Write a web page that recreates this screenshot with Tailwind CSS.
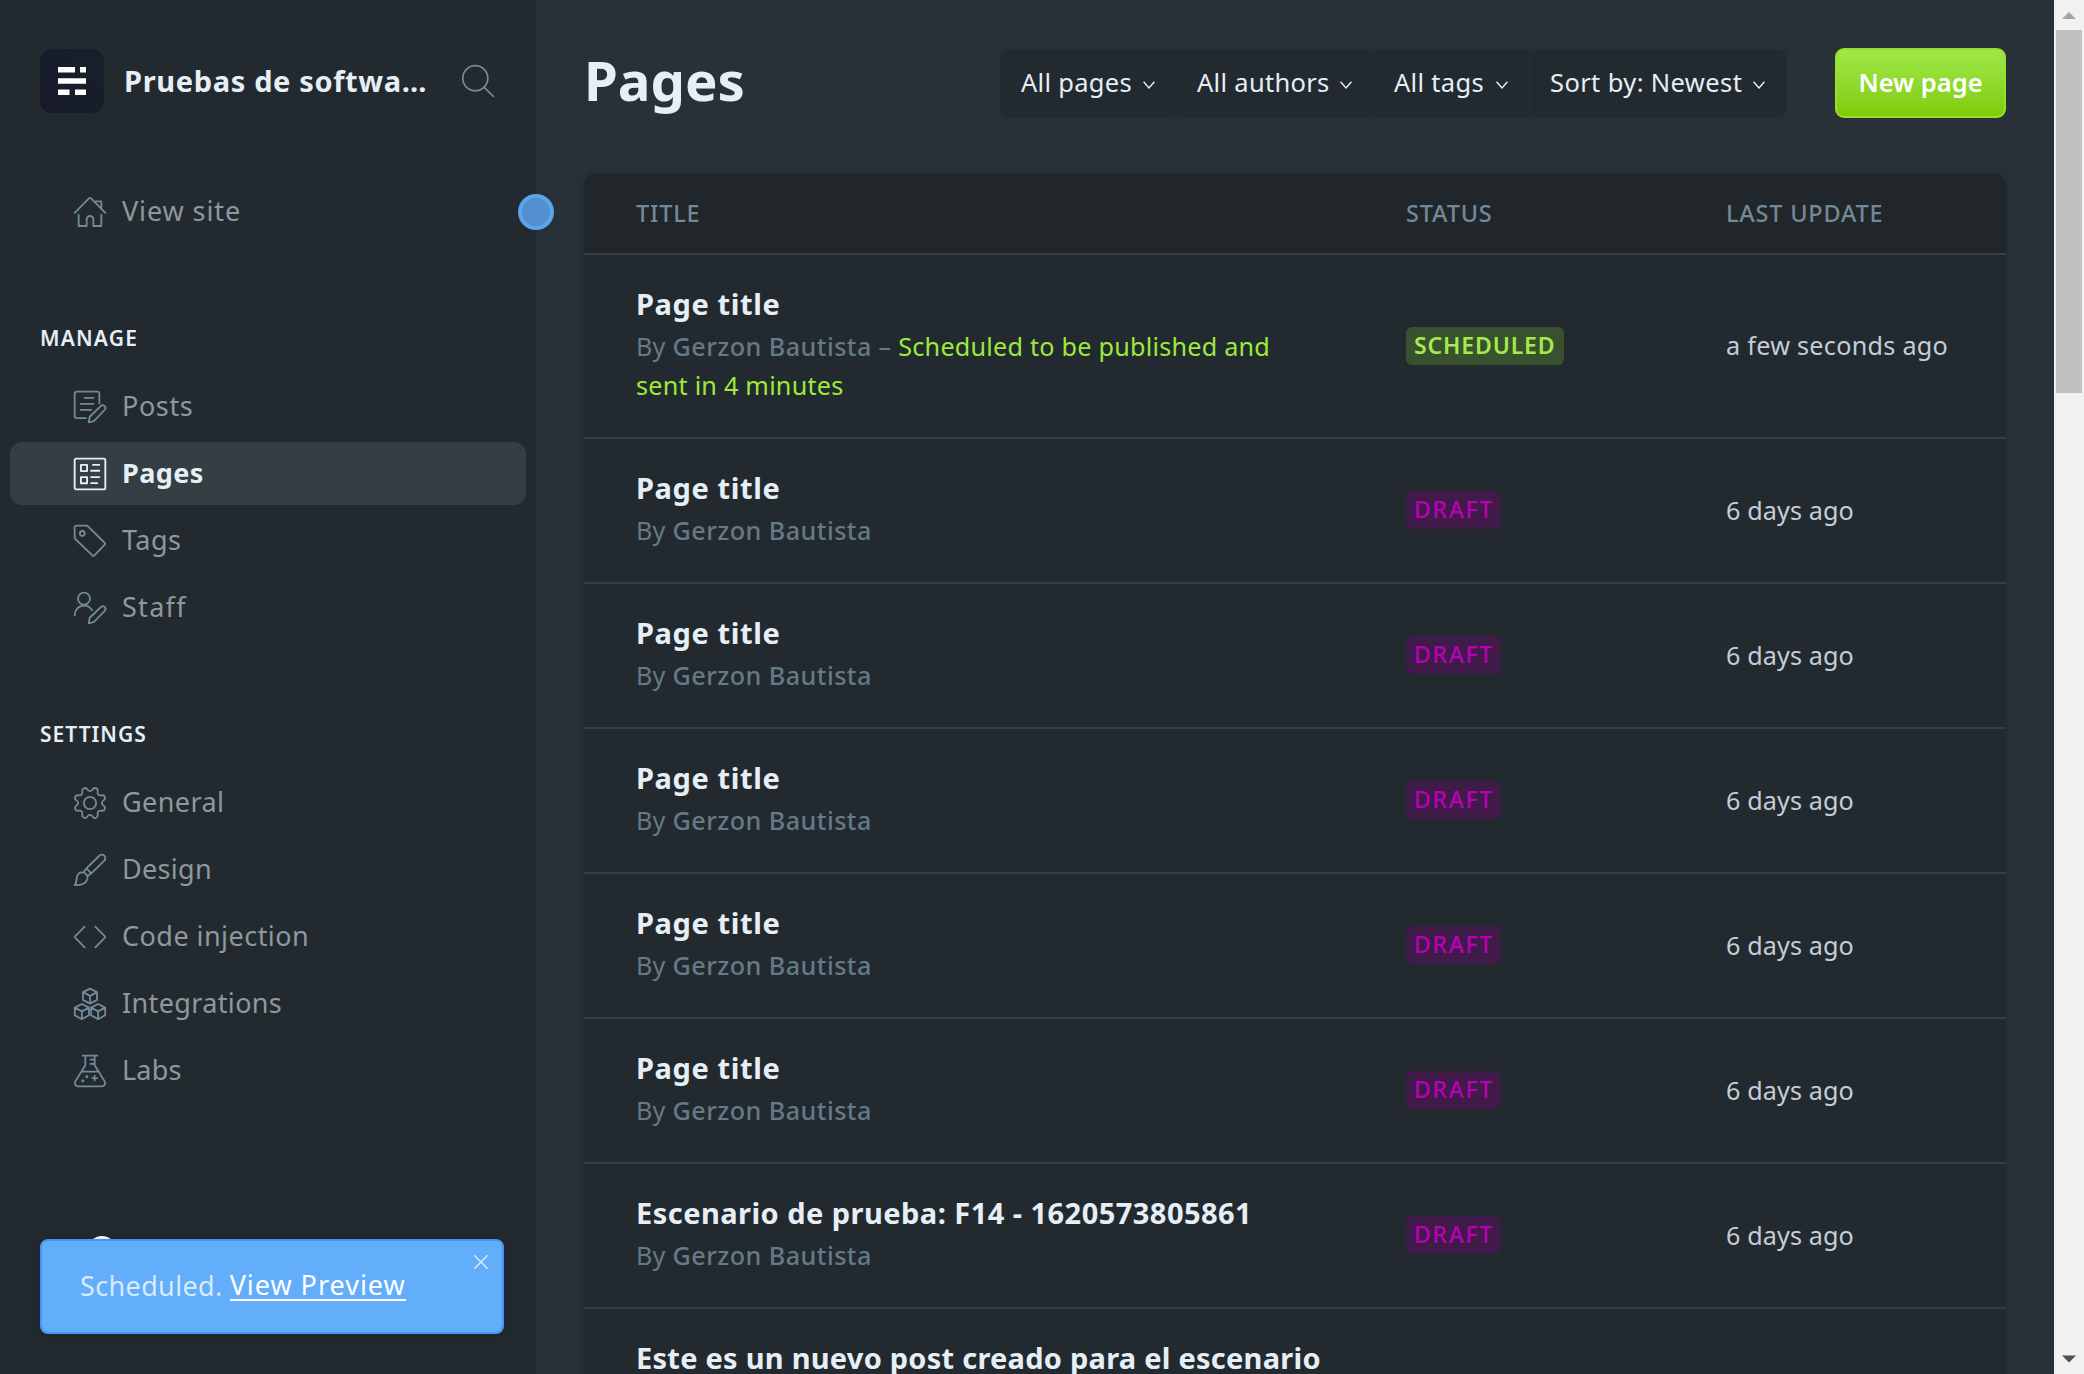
<!DOCTYPE html>
<html lang="es">
<head>
<meta charset="utf-8">
<title>Pages</title>
<script src="https://cdn.jsdelivr.net/npm/@tailwindcss/browser@4"></script>
</head>
<body class="relative flex h-[1374px] w-[2084px] overflow-hidden bg-[#273137] font-['Noto_Sans',sans-serif] text-[#e5eff5]">

<!-- Sidebar -->
<aside class="h-full w-[536px] shrink-0 bg-[#222a2f] pt-[49px]">
  <header class="flex h-16 items-center pl-10 pr-[42px]">
    <div class="flex size-16 shrink-0 items-center justify-center rounded-xl bg-gradient-to-bl from-[#15212a] to-[#181a2a]">
      <svg class="h-7 w-7" viewBox="0 0 28 28" fill="#fff"><path d="M0 0h17v5.500H0zM22 0h6v5.500h-6zM0 11.200h28v5.500H0zM0 22.500h11.500V28H0zM17 22.500h11V28H17z"/></svg>
    </div>
    <div class="ml-5 whitespace-nowrap pb-px text-[29px] leading-10 font-bold tracking-[0.650px]">Pruebas de softwa…</div>
    <svg class="ml-auto size-8 overflow-visible" viewBox="0 0 32 32" fill="none" stroke="#738a9a" stroke-width="1.700" stroke-linecap="round"><circle cx="13.300" cy="13.200" r="12.500"/><path d="M22.200 22.300l9.300 9.200"/></svg>
  </header>

  <nav class="mt-[67px] px-[10px] text-[27px] leading-9 tracking-[0.500px] text-[#8e989e]">
    <a class="flex h-[63px] items-center pl-16">
      <svg class="size-8 overflow-visible" viewBox="0 0 24 24" fill="none" stroke="#738a9a" stroke-width="1.350" stroke-linecap="round" stroke-linejoin="round"><path d="M.5 12.600 11 1.900q1-.9 2 0L23.500 12.600M3.500 14v8.500h6v-5a2.500 2.500 0 0 1 5 0v5h6V14M16.500 4h4v5.300"/></svg>
      <span class="ml-4 pb-[2px] tracking-[0.900px]">View site</span>
    </a>

    <h2 class="mt-20 pl-[30px] text-[21px] leading-[30px] font-semibold tracking-[1.200px] text-[#e5eff5]">MANAGE</h2>
    <div class="mt-[22px] flex flex-col gap-1">
      <a class="flex h-[63px] items-center pl-16">
        <svg class="size-8 overflow-visible" viewBox="0 0 24 24" fill="none" stroke="#738a9a" stroke-width="1.350" stroke-linecap="round" stroke-linejoin="round"><path d="M9 20.300H2a1.500 1.500 0 0 1-1.500-1.500V2A1.500 1.500 0 0 1 2 .5h15.500A1.500 1.500 0 0 1 19 2v7.300M8 5.200h6.500M5 9.700h9.500M5 14.200h8"/><path d="M11 23.500l.8-4.200 8.300-8a2.050 2.050 0 0 1 2.900 2.900l-8 8.300z"/></svg>
        <span class="ml-4 pb-[2px] tracking-[0.600px]">Posts</span>
      </a>
      <a class="flex h-[63px] items-center rounded-xl bg-[#343e43] pl-16 font-bold tracking-[0.400px] text-[#e5eff5]">
        <svg class="size-8 overflow-visible" viewBox="0 0 24 24" fill="none" stroke="#e5eff5" stroke-width="1.400" stroke-linecap="round" stroke-linejoin="round"><rect x=".5" y=".5" width="23" height="23" rx="1"/><path d="M5.200 5.200h4.600v4.600H5.200zM5.200 14.300h4.600v4.600H5.200zM14.200 5.200h4.800M12.800 9.600H19M12.800 14.300H19M12.800 18.800h4.700"/></svg>
        <span class="ml-4 pb-[2px]">Pages</span>
      </a>
      <a class="flex h-[63px] items-center pl-16">
        <svg class="size-8 overflow-visible" viewBox="0 0 24 24" fill="none" stroke="#738a9a" stroke-width="1.350" stroke-linecap="round" stroke-linejoin="round"><path d="M.5 9.300V1.500a1 1 0 0 1 1-1h7.800q.7 0 1.200.5l12.600 12.500q.6.6 0 1.200l-8 8.300q-.6.6-1.200 0L1 10.500q-.5-.5-.5-1.200z"/><circle cx="6.200" cy="6.300" r="1.800"/></svg>
        <span class="ml-4 pb-[2px]">Tags</span>
      </a>
      <a class="flex h-[63px] items-center pl-16">
        <svg class="size-8 overflow-visible" viewBox="0 0 24 24" fill="none" stroke="#738a9a" stroke-width="1.350" stroke-linecap="round" stroke-linejoin="round"><circle cx="7.500" cy="5" r="4.500"/><path d="M.5 17.500c0-4.200 3-7.300 7-7.300 2.700 0 4.900 1.400 6.100 3.500"/><path d="M11 23.500l.8-4.200 8.300-8a2.050 2.050 0 0 1 2.900 2.900l-8 8.300z"/></svg>
        <span class="ml-4 pb-[2px] tracking-[1.300px]">Staff</span>
      </a>
    </div>

    <h2 class="mt-20 pl-[30px] text-[21px] leading-[30px] font-semibold tracking-[1px] text-[#e5eff5]">SETTINGS</h2>
    <div class="mt-[22px] flex flex-col gap-1">
      <a class="flex h-[63px] items-center pl-16">
        <svg class="size-8 overflow-visible" viewBox="0 0 24 24" fill="none" stroke="#738a9a" stroke-width="1.350" stroke-linecap="round" stroke-linejoin="round"><circle cx="12" cy="12" r="4.600"/><path d="M10.546 2.438a1.957 1.957 0 0 0 2.908 0L14.400 1.400a1.959 1.959 0 0 1 3.410 1.413l-.071 1.400a1.958 1.958 0 0 0 2.051 2.054l1.400-.071a1.959 1.959 0 0 1 1.410 3.410l-1.042.94a1.960 1.960 0 0 0 0 2.909l1.042.94a1.959 1.959 0 0 1-1.413 3.410l-1.400-.071a1.958 1.958 0 0 0-2.056 2.056l.071 1.400A1.959 1.959 0 0 1 14.400 22.600l-.941-1.041a1.959 1.959 0 0 0-2.908 0L9.600 22.600A1.959 1.959 0 0 1 6.192 21.192l.072-1.400a1.958 1.958 0 0 0-2.056-2.056l-1.400.071A1.958 1.958 0 0 1 1.400 14.400l1.041-.94a1.960 1.960 0 0 0 0-2.909L1.400 9.606A1.958 1.958 0 0 1 2.809 6.200l1.400.071a1.958 1.958 0 0 0 2.058-2.060L6.200 2.810A1.959 1.959 0 0 1 9.606 1.400z"/></svg>
        <span class="ml-4 pb-[2px] tracking-[0.400px]">General</span>
      </a>
      <a class="flex h-[63px] items-center pl-16">
        <svg class="size-8 overflow-visible" viewBox="0 0 24 24" fill="none" stroke="#738a9a" stroke-width="1.350" stroke-linecap="round" stroke-linejoin="round"><path d="M.5 23.300c2.300-1.800.3-6.500 3.200-8.800 2-1.500 4.800-.6 5.900 1.300 1 1.800.4 4.300-1.500 5.900-2 1.700-5 1.800-7.600 1.600zM7 14l2.300-3.200L19 1.300a2.550 2.550 0 0 1 3.700 3.700L13 14.500l-3 2.200M9.300 10.800l3.700 3.700"/></svg>
        <span class="ml-4 pb-[2px] tracking-[0.300px]">Design</span>
      </a>
      <a class="flex h-[63px] items-center pl-16">
        <svg class="size-8 overflow-visible" viewBox="0 0 24 24" fill="none" stroke="#738a9a" stroke-width="1.350" stroke-linecap="round" stroke-linejoin="round"><path d="M8 4.200.8 11.500q-.5.500 0 1L8 19.800M16 4.200l7.200 7.300q.5.500 0 1L16 19.800"/></svg>
        <span class="ml-4 pb-[2px] tracking-[0.460px]">Code injection</span>
      </a>
      <a class="flex h-[63px] items-center pl-16">
        <svg class="size-8 overflow-visible" viewBox="0 0 24 24" fill="none" stroke="#738a9a" stroke-width="1.350" stroke-linecap="round" stroke-linejoin="round"><path d="M12 .5l5.300 2.600v5.800L12 11.700 6.700 8.900V3.100zM6.700 3.100 12 5.900l5.300-2.800M12 5.900v5.800M5.900 12l5.300 2.700v5.800l-5.300 2.900-5.300-2.900v-5.800zM.6 14.700l5.300 2.800 5.300-2.800M5.900 17.500v5.900M18.100 12l5.300 2.700v5.800l-5.300 2.900-5.300-2.900v-5.800zM12.800 14.700l5.300 2.800 5.300-2.800M18.100 17.500v5.900"/></svg>
        <span class="ml-4 pb-[2px] tracking-[0.360px]">Integrations</span>
      </a>
      <a class="flex h-[63px] items-center pl-16">
        <svg class="size-8 overflow-visible" viewBox="0 0 24 24" fill="none" stroke="#738a9a" stroke-width="1.350" stroke-linecap="round" stroke-linejoin="round"><path d="M6.500.5h11M8.500.5v7.200L1 19.800c-1.100 1.800.1 3.700 2.200 3.700h17.600c2.100 0 3.300-1.900 2.200-3.700L15.500 7.700V.5M5.700 12.500h12.600M12.300 3.500h3.200M12.300 6.700h3.200M15.500 15.500v3.600M13.700 17.300h3.600"/><circle cx="9.600" cy="16.200" r=".5"/><circle cx="6.600" cy="19.300" r=".5"/></svg>
        <span class="ml-4 pb-[2px] tracking-[0.200px]">Labs</span>
      </a>
    </div>
  </nav>
</aside>

<!-- Page list -->
<main class="h-full w-[1518px] shrink-0 px-12 pt-12">
  <header class="flex h-[70px] items-center">
    <h1 class="w-[417px] pb-[7px] text-[54.500px] leading-[64px] font-bold">Pages</h1>
    <div class="flex h-[67px] overflow-hidden rounded-lg bg-[#222a2f] text-[25.500px] leading-9 tracking-[0.300px] shadow-[0_0_4px_rgba(0,0,0,0.12)]">
      <div class="flex w-[176px] items-center justify-between border-r-2 border-[#272c2e] pl-5 pr-5"><span class="pb-[3px]">All pages</span><svg class="mt-1 h-2 w-3" viewBox="0 0 12 8" fill="none" stroke="#e5eff5" stroke-width="1.400"><path d="M.6.8 6 7 11.400.8"/></svg></div>
      <div class="flex w-[198px] items-center justify-between border-r-2 border-[#272c2e] pl-5 pr-[21px]"><span class="pb-[3px]">All authors</span><svg class="mt-1 h-2 w-3" viewBox="0 0 12 8" fill="none" stroke="#e5eff5" stroke-width="1.400"><path d="M.6.8 6 7 11.400.8"/></svg></div>
      <div class="flex w-[155px] items-center justify-between border-r-2 border-[#272c2e] pl-[19px] pr-5"><span class="pb-[3px]">All tags</span><svg class="mt-1 h-2 w-3" viewBox="0 0 12 8" fill="none" stroke="#e5eff5" stroke-width="1.400"><path d="M.6.8 6 7 11.400.8"/></svg></div>
      <div class="flex w-[256px] items-center justify-between pl-5 pr-[21px]"><span class="pb-[3px] tracking-[0.380px]">Sort by: Newest</span><svg class="mt-1 h-2 w-3" viewBox="0 0 12 8" fill="none" stroke="#e5eff5" stroke-width="1.400"><path d="M.6.8 6 7 11.400.8"/></svg></div>
    </div>
    <a class="ml-auto flex h-[70px] w-[171px] items-center justify-center rounded-[9px] border-2 border-[#97df2b] bg-gradient-to-b from-[#9fe847] to-[#80cc00] pb-[3px] text-[25.500px] leading-9 font-semibold text-white">New page</a>
  </header>

  <section class="mt-14 h-[1220px] overflow-hidden rounded-t-xl bg-[#222a2f] text-[25.200px] leading-[39px] shadow-[0_0_6px_rgba(0,0,0,0.15)]">
    <div class="grid h-[81px] grid-cols-[770px_320px_1fr] items-center border-b-2 border-[#343e44] bg-[#202629] pl-[52px] text-[23.500px] font-medium tracking-[0.800px] text-[#738999]">
      <span>TITLE</span><span>STATUS</span><span>LAST UPDATE</span>
    </div>

    <div class="grid h-[184px] grid-cols-[770px_320px_1fr] items-center border-b-2 border-[#343e44] pl-[52px]">
      <div class="w-[650px] self-start pt-[29px]">
        <h3 class="text-[29px] leading-10 font-bold tracking-[0.600px]">Page title</h3>
        <p class="mt-[3px] tracking-[0.230px] text-[#657987]">By <span class="font-medium tracking-[0.450px]">Gerzon Bautista</span> – <span class="text-[#9fe83c]">Scheduled to be published and sent in 4 minutes</span></p>
      </div>
      <div><span class="flex h-[38px] w-[158px] items-center rounded-md bg-[#39512f] pb-[2px] pl-2 text-[23px] leading-8 font-semibold tracking-[0.850px] text-[#a6e94b]">SCHEDULED</span></div>
      <div class="pb-[2px] tracking-[0.270px] text-[#c3cdd9]">a few seconds ago</div>
    </div>

    <div id="drafts"></div>
  </section>
</main>

<!-- Scrollbar -->
<div class="flex h-full w-[30px] shrink-0 flex-col items-center bg-[#f1f1f1]">
  <svg class="h-[30px] w-[30px]" viewBox="0 0 30 30" fill="#a3a3a3"><path d="M15 12l7 7H8z"/></svg>
  <div class="h-[363px] w-[26px] bg-[#c1c1c1]"></div>
  <svg class="mt-auto h-[30px] w-[30px]" viewBox="0 0 30 30" fill="#505050"><path d="M15 18.500l-7-7h14z"/></svg>
</div>

<!-- Sidebar resize handle -->
<div class="absolute top-[194px] left-[518px] size-9 rounded-full border-4 border-[#5ba5ee] bg-[#5290cf]"></div>

<!-- User avatar, half hidden by the notification -->
<div class="absolute top-[1236px] left-[88px] size-7 rounded-full bg-white"></div>

<!-- Notification -->
<div class="absolute top-[1239px] left-10 flex h-[95px] w-[464px] items-center rounded-lg border-2 border-[#4695f9] bg-[#62aefb] pl-[38px] text-[27px] leading-9 text-[#d8ebfd] shadow-[0_0_10px_rgba(0,0,0,0.15)]">
  <span class="pb-[2px] tracking-[0.360px]">Scheduled.</span>
  <a class="ml-[7px] mb-[2px] h-[31px] border-b-2 border-white leading-[30px] tracking-[0.980px] text-white">View Preview</a>
  <svg class="absolute top-[14px] right-[14px] size-[14px]" viewBox="0 0 14 14" fill="none" stroke="#d8ebfd" stroke-width="1.500" stroke-linecap="round"><path d="M.8.8l12.400 12.400M13.200.8.8 13.200"/></svg>
</div>

<template id="draft-row">
  <div class="grid h-[145px] grid-cols-[770px_320px_1fr] items-center border-b-2 border-[#343e44] pl-[52px]">
    <div class="w-[700px] self-start pt-[29px]">
      <h3 class="text-[29px] leading-10 font-bold"></h3>
      <p class="mt-[3px] tracking-[0.230px] text-[#657987]">By <span class="font-medium tracking-[0.450px]">Gerzon Bautista</span></p>
    </div>
    <div class="pb-px"><span class="flex h-[38px] w-[95px] items-center rounded-md bg-[#401a48] pb-[2px] pl-2 text-[23px] leading-8 font-medium tracking-[1.700px] text-[#b900b9]">DRAFT</span></div>
    <div class="tracking-[0.100px] text-[#c3cdd9]">6 days ago</div>
  </div>
</template>
<script>
const rows = [
  ['Page title', 'tracking-[0.600px]'],
  ['Page title', 'tracking-[0.600px]'],
  ['Page title', 'tracking-[0.600px]'],
  ['Page title', 'tracking-[0.600px]'],
  ['Page title', 'tracking-[0.600px]'],
  ['Escenario de prueba: F14 - 1620573805861', 'tracking-[0.460px]'],
];
const list = document.getElementById('drafts');
const template = document.getElementById('draft-row');
for (const [title, tracking] of rows) {
  const row = template.content.cloneNode(true);
  const heading = row.querySelector('h3');
  heading.textContent = title;
  heading.classList.add(tracking);
  list.append(row);
}
// The last title is long; its row continues below the fold.
const last = document.createElement('div');
last.className = 'pl-[52px] pt-[29px]';
last.innerHTML = '<h3 class="text-[29px] leading-10 font-bold tracking-[0.250px]">Este es un nuevo post creado para el escenario</h3>';
list.append(last);
</script>
</body>
</html>
